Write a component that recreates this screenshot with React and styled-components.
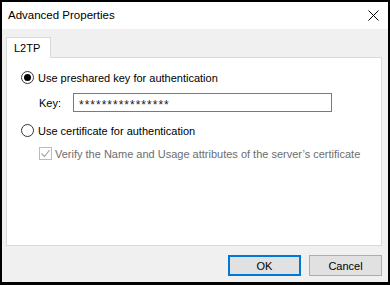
import styled, { createGlobalStyle } from "styled-components";

//------------------------------------------------------------------->

const GlobalStyle = createGlobalStyle`
  html, body {
    margin: 0;
    padding: 0;
    background: #000;
  }
  * {
    box-sizing: border-box;
  }
`;

const Window = styled.div`
  width: 390px;
  height: 285px;
  border: 2px solid #000;
  border-bottom-width: 3px;
  display: flex;
  flex-direction: column;
  background-color: #f0f0f0;
  font-family: "Liberation Sans", Arial, sans-serif;
  font-size: 11px;
  color: #000;
`;
const TitleBar = styled.div`
  height: 27px;
  background-color: #fff;
  display: flex;
  align-items: center;
  justify-content: space-between;
  padding: 0 8px 0 6px;
  flex-shrink: 0;
`;
const Title = styled.span`
  font-size: 11.5px;
  line-height: 1;
`;
const CloseButton = styled.div`
  width: 11px;
  height: 11px;
  display: flex;
  margin-right: 1px;
`;
const Body = styled.div`
  flex: 1;
  display: flex;
  flex-direction: column;
  padding: 8px 6px 6px 4px;
`;
const TabStrip = styled.div`
  display: flex;
  height: 20px;
  position: relative;
  z-index: 1;
`;
const Tab = styled.div`
  width: 45px;
  height: 21px;
  background-color: #fff;
  border: 1px solid #d9d9d9;
  border-bottom: none;
  padding: 3px 0 0 7px;
  line-height: 14px;
`;
const Panel = styled.div`
  height: 189px;
  background-color: #fff;
  border: 1px solid #d9d9d9;
  padding: 11px 14px 0 14px;
  display: flex;
  flex-direction: column;
`;
const OptionRow = styled.label`
  display: flex;
  align-items: center;
  height: 17px;
  white-space: nowrap;
  margin-top: ${({ $gap }) => $gap || 0}px;
  padding-left: ${({ $indent }) => $indent || 0}px;
  color: ${({ $disabled }) => ($disabled ? "#6d6d6d" : "#000")};
`;
const Radio = styled.span`
  width: 13px;
  height: 13px;
  border-radius: 50%;
  border: 1px solid #333;
  display: flex;
  align-items: center;
  justify-content: center;
  margin-right: 4px;
  flex-shrink: 0;

  &::after {
    content: "";
    width: 7px;
    height: 7px;
    border-radius: 50%;
    background-color: ${({ $checked }) => ($checked ? "#000" : "transparent")};
  }
`;
const CheckBox = styled.span`
  width: 13px;
  height: 13px;
  border: 1px solid #bcbcbc;
  display: flex;
  margin-right: 3px;
  flex-shrink: 0;
`;
const KeyRow = styled.div`
  display: flex;
  align-items: center;
  margin-top: 7px;
  padding-left: 18px;
`;
const KeyLabel = styled.span`
  width: 34px;
`;
const KeyInput = styled.div`
  width: 259px;
  height: 19px;
  border: 1px solid #7a7a7a;
  padding: 4px 0 0 5px;
  display: flex;
  align-items: center;
  font-size: 12px;
  letter-spacing: 1px;
  color: #1a1a1a;
`;
const ButtonBar = styled.div`
  display: flex;
  justify-content: flex-end;
  gap: 8px;
  margin-top: 9px;
`;
const Button = styled.div`
  width: 73px;
  height: 21px;
  background-color: #e1e1e1;
  border: ${({ $default }) =>
    $default ? "2px solid #0078d7" : "1px solid #adadad"};
  display: flex;
  align-items: center;
  justify-content: center;
`;

//------------------------------------------------------------------->

function App() {
  return (
    <>
      <GlobalStyle />
      <Window>
        <TitleBar>
          <Title>Advanced Properties</Title>
          <CloseButton>
            <svg width="11" height="11" viewBox="0 0 11 11">
              <path d="M0.5 0.5 L10.5 10.5 M10.5 0.5 L0.5 10.5" stroke="#000" strokeWidth="1" fill="none" />
            </svg>
          </CloseButton>
        </TitleBar>
        <Body>
          <TabStrip>
            <Tab>L2TP</Tab>
          </TabStrip>
          <Panel>
            <OptionRow>
              <Radio $checked />
              Use preshared key for authentication
            </OptionRow>
            <KeyRow>
              <KeyLabel>Key:</KeyLabel>
              <KeyInput>****************</KeyInput>
            </KeyRow>
            <OptionRow $gap={10}>
              <Radio />
              Use certificate for authentication
            </OptionRow>
            <OptionRow $gap={6} $indent={18} $disabled>
              <CheckBox>
                <svg width="11" height="11" viewBox="0 0 11 11">
                  <path d="M1.5 5.5 L4.5 8.5 L9.5 2" stroke="#a8a8a8" strokeWidth="1.2" fill="none" />
                </svg>
              </CheckBox>
              Verify the Name and Usage attributes of the server’s certificate
            </OptionRow>
          </Panel>
          <ButtonBar>
            <Button $default>OK</Button>
            <Button>Cancel</Button>
          </ButtonBar>
        </Body>
      </Window>
    </>
  );
}

export default App;
